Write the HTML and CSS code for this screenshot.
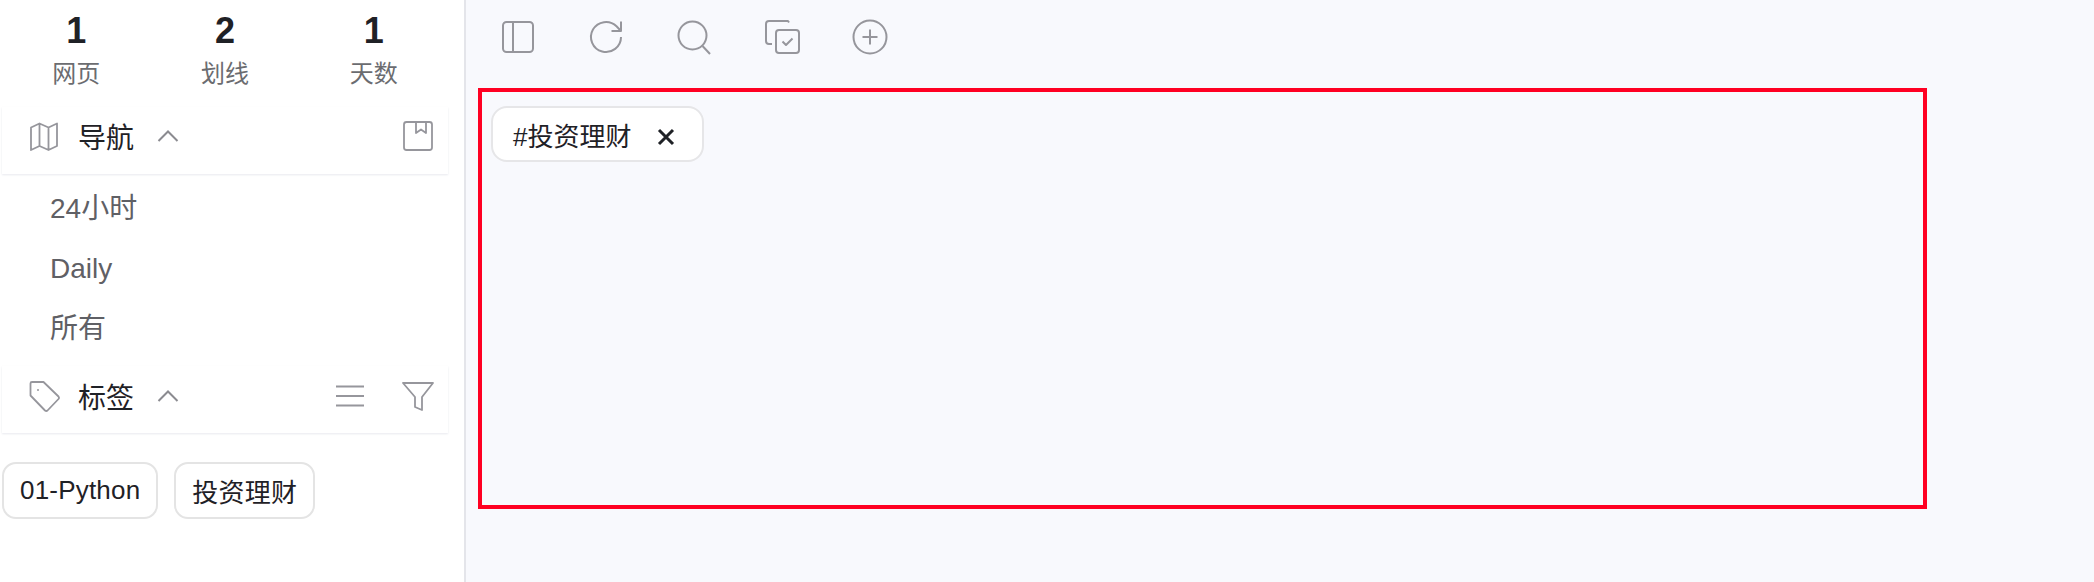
FILE: index.html
```html
<!DOCTYPE html>
<html lang="zh-CN">
<head>
    <meta charset="UTF-8">
    <title>Tags</title>
    <link rel="stylesheet" href="styles.css">
</head>
<body>
    <div class="app">
        <aside class="sidebar">
            <div class="stats">
                <div class="stat"><strong>1</strong><span>网页</span></div>
                <div class="stat"><strong>2</strong><span>划线</span></div>
                <div class="stat"><strong>1</strong><span>天数</span></div>
            </div>

            <div class="section-head nav-head">
                <svg class="icon" viewBox="0 0 32 32"><path d="M3 7.500 11.500 3.500 20.500 7.500 29 3.500V26L20.500 30 11.500 26 3 30Z M11.500 3.500V26 M20.500 7.500V30"/></svg>
                <span class="section-title">导航</span>
                <svg class="chevron" viewBox="0 0 22 12"><path d="M1.500 11 11 1.500 20.500 11"/></svg>
                <div class="head-actions">
                    <svg class="icon" viewBox="0 0 32 32"><rect x="2" y="2" width="28" height="28" rx="2.500"/><path d="M14 2V13L19 9.500 24 13V2"/></svg>
                </div>
            </div>
            <ul class="nav-list">
                <li>24小时</li>
                <li>Daily</li>
                <li>所有</li>
            </ul>

            <div class="section-head tag-head">
                <svg class="icon" viewBox="0 0 32 32"><path d="M2.500 3.500A1.500 1.500 0 0 1 4 2H15.500L30.500 16.500A2 2 0 0 1 30.500 19L19.500 30.500A2 2 0 0 1 17 30.500L2.500 15.500Z"/><circle class="dot" cx="10" cy="10" r="1"/></svg>
                <span class="section-title">标签</span>
                <svg class="chevron" viewBox="0 0 22 12"><path d="M1.500 11 11 1.500 20.500 11"/></svg>
                <div class="head-actions">
                    <svg class="icon" viewBox="0 0 32 32"><path d="M2 6.500H30 M2 16H30 M2 25.500H30"/></svg>
                    <svg class="icon" viewBox="0 0 32 32"><path d="M1 3H31L20 17V30L13 27V17Z"/></svg>
                </div>
            </div>
            <div class="tag-list">
                <span class="tag">01-Python</span>
                <span class="tag">投资理财</span>
            </div>
        </aside>

        <main class="content">
            <div class="toolbar">
                <svg class="tool" viewBox="0 0 36 36"><rect x="3" y="3" width="30" height="30" rx="3.500"/><path d="M13 3V33"/></svg>
                <svg class="tool" viewBox="0 0 36 36"><path d="M33 18A15 15 0 1 1 28.500 7.300L33 12 M33 2.500V12H23.500"/></svg>
                <svg class="tool" viewBox="0 0 36 36"><circle cx="16.500" cy="16.500" r="14"/><path d="M26.500 27 34 35"/></svg>
                <svg class="tool" viewBox="0 0 36 36"><path d="M25 3.500 24 2H5A3 3 0 0 0 2 5V22A3 3 0 0 0 5 25H8"/><rect x="12" y="11" width="23" height="23" rx="3"/><path d="M18.500 22.500 22 26 28.500 19.500"/></svg>
                <svg class="tool" viewBox="0 0 36 36"><circle cx="18" cy="18" r="16.500"/><path d="M18 10.500V25.500 M10.500 18H25.500"/></svg>
            </div>
            <div class="tag-filter">
                <span class="active-tag">#投资理财<svg class="close" viewBox="0 0 18 18"><path d="M2 2 16 16 M16 2 2 16"/></svg></span>
            </div>
        </main>
    </div>
</body>
</html>
```

FILE: styles.css
```css
* {
    box-sizing: border-box;
}

body {
    margin: 0;
    font-family: "Liberation Sans", "Noto Sans CJK SC", sans-serif;
    background-color: #f8f9fd;
    color: #1f2126;
}

.app {
    display: flex;
    height: 582px;
    overflow: hidden;
}

.sidebar {
    width: 466px;
    flex-shrink: 0;
    background-color: #fff;
    border-right: 2px solid #e4e5ea;
    padding: 0 16px 0 2px;
}

.stats {
    display: grid;
    grid-template-columns: repeat(3, 1fr);
    height: 107px;
}

.stat {
    display: flex;
    flex-direction: column;
    align-items: center;
    padding-top: 10px;
}

.stat strong {
    font-size: 36px;
    line-height: 42px;
}

.stat span {
    font-size: 24px;
    line-height: 44px;
    color: #6b6c70;
}

.section-head {
    display: flex;
    align-items: center;
    height: 67px;
    padding-left: 26px;
    padding-right: 14px;
    box-shadow: 0 1px 2px rgba(30, 40, 90, 0.1);
}

.nav-head {
    padding-bottom: 9px;
}

.tag-head {
    padding-bottom: 7px;
}

.section-title {
    font-size: 28px;
    margin-left: 18px;
    margin-right: 23px;
}

.icon {
    width: 32px;
    height: 32px;
    fill: none;
    stroke: #96969c;
    stroke-width: 1.8;
    stroke-linejoin: round;
}

.dot {
    fill: #96969c;
    stroke: none;
}

.chevron {
    width: 22px;
    height: 12px;
    fill: none;
    stroke: #8b8b90;
    stroke-width: 2;
}

.head-actions {
    display: flex;
    gap: 36px;
    margin-left: auto;
}

.nav-list {
    list-style: none;
    margin: 0;
    padding: 5px 0 0 48px;
    height: 192px;
}

.nav-list li {
    font-size: 28px;
    line-height: 60px;
    color: #5f6065;
}

.tag-list {
    display: flex;
    gap: 16px;
    padding-top: 29px;
}

.tag {
    display: flex;
    align-items: center;
    height: 57px;
    padding: 0 16px;
    font-size: 26px;
    letter-spacing: 0.2px;
    background-color: #fff;
    border: 2px solid #e4e4e4;
    border-radius: 14px;
}

.content {
    flex: 1;
    padding-left: 12px;
}

.toolbar {
    display: flex;
    gap: 52px;
    height: 88px;
    padding: 19px 0 0 22px;
}

.tool {
    width: 36px;
    height: 36px;
    fill: none;
    stroke: #96969c;
    stroke-width: 2;
    stroke-linejoin: round;
}

.tag-filter {
    width: 1449px;
    height: 421px;
    border: 4px solid #ff0022;
    padding: 14px 9px;
}

.active-tag {
    display: inline-flex;
    align-items: center;
    height: 56px;
    padding: 0 27px 0 20px;
    font-size: 26px;
    background-color: #fff;
    border: 2px solid #e6e6e8;
    border-radius: 16px;
}

.close {
    width: 18px;
    height: 18px;
    margin-left: 26px;
    margin-top: 6px;
    fill: none;
    stroke: #1f2126;
    stroke-width: 3;
}
```
